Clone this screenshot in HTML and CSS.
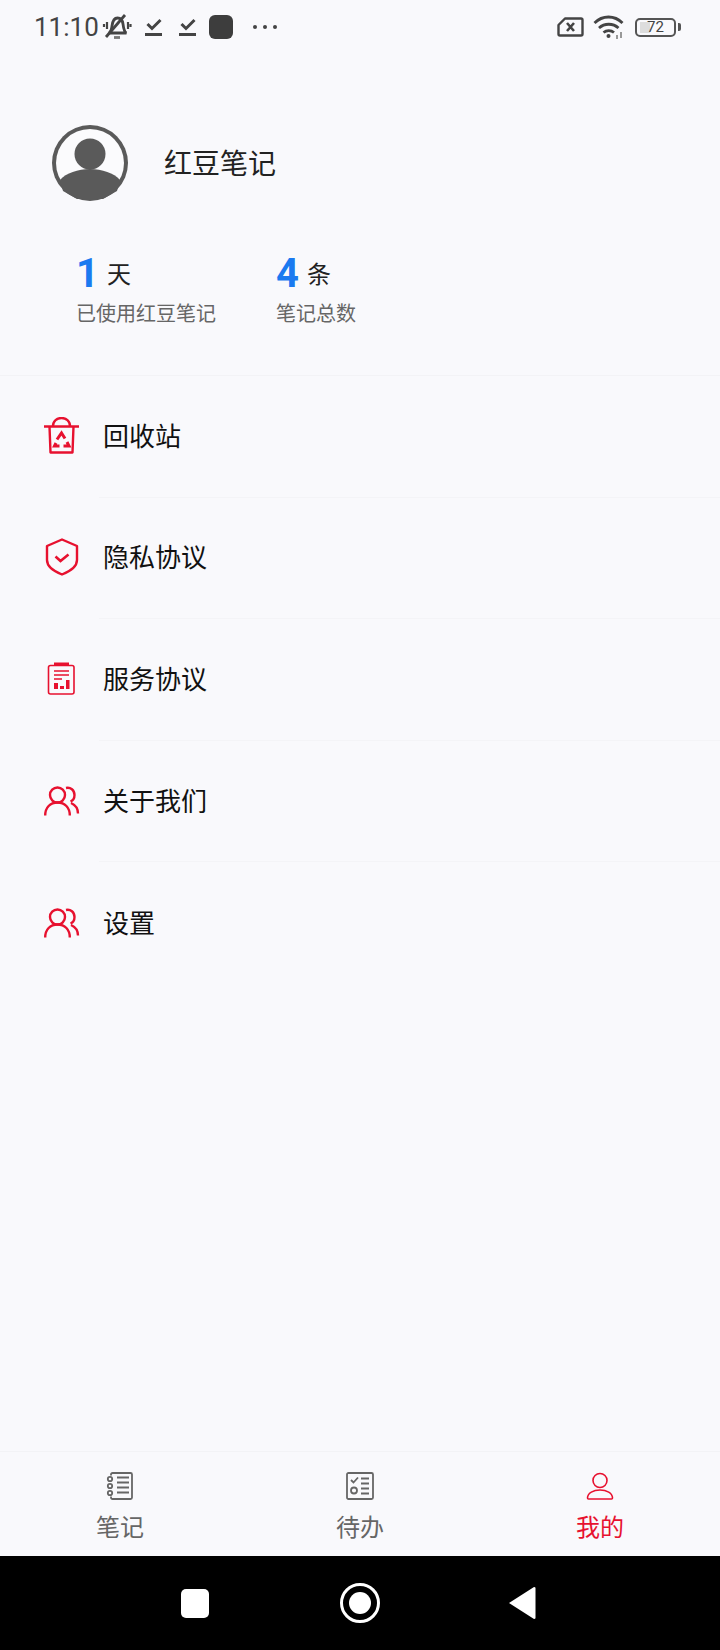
FILE: index.html
```html
<!DOCTYPE html>
<html lang="zh">
<head>
	<meta charset="UTF-8">
	<title>红豆笔记</title>
	<link rel="stylesheet" href="styles.css">
</head>
<body>
	<div class="app">
		<!--status bar-->
		<div class="statusbar">
			<div class="status-left">
				<span class="time">11:10</span>
				<svg class="ic-bell" width="30" height="26" viewBox="0 0 30 26" fill="none" stroke="#444" stroke-width="2.800">
					<path d="M7 19c2-1 2.500-3 3-7 .5-4 2-8 5.500-8 3 0 5 2.500 5.500 6 .5 4 1 8 3.500 9z"/>
					<path d="M12 23.500h6" stroke="#777"/>
					<path d="M23 1L4 23" stroke-width="2.800"/>
					<path d="M5 8v7M2 10v3M26 8v7M28.500 10v3" stroke-width="2.200"/>
				</svg>
				<svg class="ic-check" width="18" height="20" viewBox="0 0 18 20" fill="none" stroke="#444">
					<path d="M2.500 8l4.500 4.500L15.500 4" stroke-width="3"/>
					<path d="M0 18.500h17" stroke-width="3"/>
				</svg>
				<svg class="ic-check" width="18" height="20" viewBox="0 0 18 20" fill="none" stroke="#444">
					<path d="M2.500 8l4.500 4.500L15.500 4" stroke-width="3"/>
					<path d="M0 18.500h17" stroke-width="3"/>
				</svg>
				<span class="app-square"></span>
				<span class="dots"><i></i><i></i><i></i></span>
			</div>
			<div class="status-right">
				<svg width="27" height="20" viewBox="0 0 27 20" fill="none" stroke="#444" stroke-width="2.400">
					<path d="M8 1.500h16a1.500 1.500 0 0 1 1.500 1.500v14a1.500 1.500 0 0 1-1.500 1.500H3a1.500 1.500 0 0 1-1.500-1.500V8z" stroke-linejoin="round"/>
					<path d="M10 6l7 8M17 6l-7 8" stroke-width="2.600"/>
				</svg>
				<svg width="32" height="24" viewBox="0 0 32 24" fill="none" stroke="#444" stroke-width="2.800">
					<path d="M1.500 8c8-8 20-8 28 0M6 13c5.500-5 14-5 19.500 0M10.500 17.500c3-2.500 7.500-2.500 10.500 0"/>
					<circle cx="15.500" cy="21" r="2" fill="#444" stroke="none"/>
					<path d="M24 20v4M28 17v6" stroke="#999" stroke-width="2"/>
				</svg>
				<div class="battery">
					<span class="battery-fill"></span>
					<span class="battery-num">72</span>
				</div>
				<span class="battery-cap"></span>
			</div>
		</div>

		<!--profile-->
		<div class="profile">
			<div class="profile-top">
				<svg class="avatar" width="76" height="76" viewBox="0 0 76 76">
					<circle cx="38" cy="38" r="38" fill="#5a5a5a"/>
					<circle cx="38" cy="38" r="34" fill="#fbfbfd"/>
					<circle cx="38" cy="29" r="15.500" fill="#5a5a5a"/>
					<path d="M8 55c6-7 18-11 30-11s24 4 30 11l-3 11-14 8H25l-14-8z" fill="#5a5a5a"/>
				</svg>
				<span class="name">红豆笔记</span>
			</div>
			<div class="stats">
				<div class="stat stat-days">
					<div class="stat-value"><span class="num">1</span><span class="unit">天</span></div>
					<div class="stat-label">已使用红豆笔记</div>
				</div>
				<div class="stat">
					<div class="stat-value"><span class="num">4</span><span class="unit">条</span></div>
					<div class="stat-label">笔记总数</div>
				</div>
			</div>
		</div>

		<!--menu-->
		<div class="menu">
			<div class="row">
				<svg class="row-icon" width="36" height="38" viewBox="0 0 36 38" fill="none" stroke="#e7112f" stroke-width="2.400">
					<path d="M0 9.500h35"/>
					<path d="M9 9c0-5 4-8 8.500-8S26 4 26 9"/>
					<path d="M5.500 9.500l1 26h22l1-26" stroke-linejoin="round"/>
					<path d="M13 22.500l4.500-6.500 3.500 5.500M15.500 29h-5l1.500-3M19.500 29H25l-2-4" stroke-width="3"/>
				</svg>
				<span class="row-text">回收站</span>
			</div>
			<div class="row">
				<svg class="row-icon" width="36" height="38" viewBox="0 0 36 38" fill="none" stroke="#e7112f" stroke-width="2.400">
					<path d="M18 1.500l15 6.500v14c0 6-6 11-15 14.500C9 33 3 28 3 22V8z" stroke-linejoin="round"/>
					<path d="M11.500 18.500l5 4.500 8-6.500" stroke-width="2.600"/>
				</svg>
				<span class="row-text">隐私协议</span>
			</div>
			<div class="row">
				<svg class="row-icon" width="36" height="36" viewBox="0 0 36 36" fill="none" stroke="#e7112f" stroke-width="1.600">
					<rect x="4.500" y="4.500" width="25.500" height="28.500" rx="2"/>
					<path d="M10 3h15" stroke-width="3"/>
					<path d="M10 10h15M10 14h15M10 18h8"/>
					<path d="M10 22h4v6h-4zM16 25h4v3h-4zM22 19h3.500v9H22z" fill="#e7112f" stroke="none"/>
				</svg>
				<span class="row-text">服务协议</span>
			</div>
			<div class="row">
				<svg class="row-icon row-icon-people" width="36" height="36" viewBox="0 0 36 36" fill="none" stroke="#e7112f" stroke-width="2.400">
					<circle cx="13.500" cy="10" r="7.500"/>
					<path d="M1.200 30.500c0-8 5-13 12.300-13s12.300 5 12.300 13"/>
					<path d="M22 3c4.500-1 8.500 2 8.500 7 0 3-1.500 5.500-4 6.500M27 18c4.500 2 7 6 7 10.500"/>
				</svg>
				<span class="row-text">关于我们</span>
			</div>
			<div class="row">
				<svg class="row-icon row-icon-people" width="36" height="36" viewBox="0 0 36 36" fill="none" stroke="#e7112f" stroke-width="2.400">
					<circle cx="13.500" cy="10" r="7.500"/>
					<path d="M1.200 30.500c0-8 5-13 12.300-13s12.300 5 12.300 13"/>
					<path d="M22 3c4.500-1 8.500 2 8.500 7 0 3-1.500 5.500-4 6.500M27 18c4.500 2 7 6 7 10.500"/>
				</svg>
				<span class="row-text">设置</span>
			</div>
		</div>

		<!--bottom tabs-->
		<div class="tabbar">
			<div class="tab">
				<svg width="28" height="28" viewBox="0 0 28 28" fill="none" stroke="#666" stroke-width="1.800">
					<path d="M5 3.500V2.500a1.500 1.500 0 0 1 1.500-1.500h18a1.500 1.500 0 0 1 1.500 1.500v23a1.500 1.500 0 0 1-1.500 1.500h-18A1.500 1.500 0 0 1 5 25.500v-1"/>
					<path d="M11 5.500h12M11 10.500h12M11 15.500h12M11 20.500h12"/>
					<circle cx="4" cy="7" r="2.200"/>
					<circle cx="4" cy="14" r="2.200"/>
					<circle cx="4" cy="21" r="2.200"/>
				</svg>
				<span>笔记</span>
			</div>
			<div class="tab">
				<svg width="28" height="28" viewBox="0 0 28 28" fill="none" stroke="#666" stroke-width="1.800">
					<rect x="1" y="1" width="26" height="26" rx="1.500"/>
					<path d="M5 8l2.500 2.500L12 5.500"/>
					<circle cx="8" cy="18.500" r="3"/>
					<path d="M15 6.500h8M15 11.500h8M15 16.500h8M15 21.500h8"/>
				</svg>
				<span>待办</span>
			</div>
			<div class="tab tab-active">
				<svg width="28" height="28" viewBox="0 0 28 28" fill="none" stroke="#e7112f" stroke-width="1.600">
					<circle cx="14" cy="8.500" r="7"/>
					<path d="M1.500 26c0-5 6-8 12.500-8s12.500 3 12.500 8c0 .5-.3 1-1 1h-23c-.7 0-1-.5-1-1z"/>
				</svg>
				<span>我的</span>
			</div>
		</div>

		<!--android nav-->
		<div class="navbar">
			<span class="nav-square"></span>
			<span class="nav-home"><i></i></span>
			<svg width="28" height="34" viewBox="0 0 28 34"><path d="M1 17L26 1q1.500 0 1.500 1v30q0 1-1.500 1z" fill="#fff"/></svg>
		</div>
	</div>
</body>
</html>
```
FILE: styles.css
```css
/*CSS*/

body {
	margin: 0;
	padding: 0;
	background-color: #f9f9fc;
	font-family: "Noto Sans CJK SC", "Noto Sans", sans-serif;
	overflow: hidden;
}

.app {
	width: 720px;
	height: 1650px;
	display: flex;
	flex-direction: column;
}

/* status bar */
.statusbar {
	height: 54px;
	flex: none;
	display: flex;
	justify-content: space-between;
	align-items: center;
	padding: 0 39px 0 34px;
}

.status-left,
.status-right {
	display: flex;
	align-items: center;
}

.time {
	font-family: Roboto, sans-serif;
	font-size: 26px;
	color: #444;
	width: 68px;
}

.ic-check {
	margin-left: 13px;
	margin-top: -2px;
}

.ic-check + .ic-check {
	margin-left: 16px;
}

.app-square {
	width: 24px;
	height: 24px;
	margin-left: 12px;
	border-radius: 6px;
	background-color: #3d3d3d;
}

.dots {
	display: flex;
	gap: 6px;
	margin-left: 20px;
}

.dots i {
	width: 4px;
	height: 4px;
	border-radius: 50%;
	background-color: #444;
}

.status-right svg + svg {
	margin-left: 9px;
}

.battery {
	position: relative;
	width: 41px;
	height: 19px;
	margin-left: 10px;
	box-sizing: border-box;
	border: 2px solid #555;
	border-radius: 5px;
	display: flex;
	align-items: center;
	justify-content: center;
}

.battery-fill {
	position: absolute;
	left: 3px;
	top: 2px;
	bottom: 2px;
	width: 10px;
	background-color: #ddd;
}

.battery-num {
	position: relative;
	font-family: Roboto, sans-serif;
	font-size: 15px;
	line-height: 15px;
	color: #444;
}

.battery-cap {
	width: 3px;
	height: 8px;
	margin-left: 2px;
	border-radius: 0 2px 2px 0;
	background-color: #555;
}

/* profile */
.profile {
	height: 322px;
	flex: none;
	box-sizing: border-box;
	padding: 71px 0 0 52px;
	border-bottom: 1px solid #f3f3f6;
}

.profile-top {
	display: flex;
	align-items: center;
}

.name {
	margin-left: 36px;
	padding-bottom: 2px;
	font-size: 28px;
	color: #222;
}

.stats {
	display: flex;
	margin: 49px 0 0 24px;
}

.stat-days {
	width: 200px;
}

.stat-value {
	display: flex;
	align-items: center;
	height: 48px;
}

.num {
	font-family: Roboto, sans-serif;
	font-weight: 700;
	font-size: 40px;
	line-height: 48px;
	color: #1a7af0;
}

.unit {
	margin-left: 8px;
	padding-bottom: 3px;
	font-size: 24px;
	color: #222;
}

.stat-label {
	font-size: 20px;
	line-height: 30px;
	color: #666;
}

/* menu rows */
.menu {
	flex: 1;
}

.row {
	height: 121.6px;
	box-sizing: border-box;
	display: flex;
	align-items: center;
	padding-left: 44px;
	padding-bottom: 1px;
	border-bottom: 1px solid #f5f5f8;
	border-image: linear-gradient(to right, transparent 100px, #f4f4f7 100px) 1;
}

.row:last-child {
	border: none;
}

.row-icon {
	flex: none;
	width: 36px;
}

.row-icon-people {
	margin-top: 4px;
}

.row-text {
	margin-left: 23px;
	padding-bottom: 3px;
	font-size: 26px;
	color: #111;
}

/* bottom tabs */
.tabbar {
	height: 105px;
	flex: none;
	box-sizing: border-box;
	display: flex;
	justify-content: space-around;
	padding: 20px 0 0;
	border-top: 1px solid #f3f3f6;
}

.tab {
	width: 240px;
	display: flex;
	flex-direction: column;
	align-items: center;
	font-size: 24px;
	line-height: 34px;
	color: #666;
}

.tab svg {
	margin-bottom: 9px;
}

.tab-active {
	color: #e7112f;
}

/* android nav */
.navbar {
	height: 94px;
	flex: none;
	background-color: #000;
	display: flex;
	align-items: center;
	padding-left: 181px;
}

.nav-square {
	width: 28px;
	height: 29px;
	border-radius: 5px;
	background-color: #fff;
}

.nav-home {
	width: 40px;
	height: 40px;
	margin-left: 131px;
	box-sizing: border-box;
	border: 3px solid #fff;
	border-radius: 50%;
	display: flex;
	align-items: center;
	justify-content: center;
}

.nav-home i {
	width: 22px;
	height: 22px;
	border-radius: 50%;
	background-color: #fff;
}

.navbar svg {
	margin-left: 128px;
}
```
